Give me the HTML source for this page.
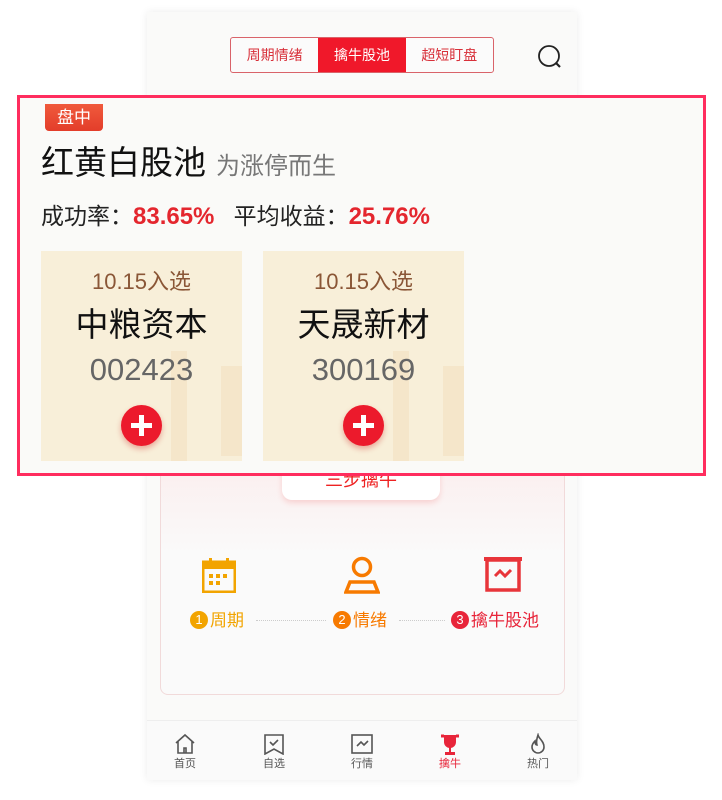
<!DOCTYPE html>
<html><head><meta charset="utf-8"><style>
*{margin:0;padding:0;box-sizing:border-box}
body{width:722px;height:800px;background:#fff;position:relative;overflow:hidden;font-family:"Liberation Sans","Noto Sans CJK SC",sans-serif}
.phone{position:absolute;left:147px;top:12px;width:430px;height:768px;background:#fafaf9;box-shadow:0 0 8px rgba(0,0,0,.08)}
.seg{position:absolute;left:230px;top:37px;width:264px;height:36px;border:1px solid #d9636a;border-radius:3px;display:flex;background:#fbfbfb}
.seg div{flex:1;text-align:center;line-height:34px;font-size:14px;color:#d8303a}
.seg .on{background:#f0182a;color:#fff}
.ov{position:absolute;left:17px;top:95px;width:689px;height:381px;border:3px solid #ff2d5e;background:#fafaf8}
.badge{position:absolute;left:45px;top:104px;width:58px;height:27px;background:linear-gradient(#f05a3c,#e33d2a);border-radius:0 0 4px 4px;color:#fff;font-size:17px;text-align:center;line-height:27px}
.t{position:absolute;left:41px;top:141px;font-size:33px;line-height:44px;color:#111;white-space:nowrap}
.t span{font-size:24px;color:#777;margin-left:10px}
.s{position:absolute;left:41px;top:200px;font-size:23px;line-height:32px;color:#222;white-space:nowrap}
.s b{font-size:24px;font-weight:bold;color:#e4262e}
.card{position:absolute;top:251px;width:201px;height:210px;background:#f8efd9;text-align:center;overflow:hidden}
.card div.x{position:relative;line-height:1.2}
.card .d{margin-top:18px;font-size:22px;color:#8a5636}
.card .n{margin-top:10px;font-size:33px;color:#111}
.card .c{margin-top:6px;font-size:31px;color:#666}
.bar{position:absolute;background:#f3dfc0;opacity:.6}
.plus{position:absolute;left:80px;top:154px;width:41px;height:41px;border-radius:50%;background:#ec1a2c;box-shadow:0 3px 6px rgba(200,0,0,.3)}
.plus:before{content:"";position:absolute;left:10px;top:18px;width:21px;height:5px;background:#fff}
.plus:after{content:"";position:absolute;left:18px;top:10px;width:5px;height:21px;background:#fff}
.box{position:absolute;left:160px;top:460px;width:405px;height:235px;border:1px solid #f1dada;border-radius:8px;background:linear-gradient(#fbeeee,#fafafa 40%)}
.tab3{position:absolute;left:282px;top:462px;width:158px;height:38px;background:#fff;border-radius:0 0 10px 10px;box-shadow:0 3px 6px rgba(240,80,80,.2);color:#e22;font-size:18px;text-align:center;line-height:36px}
.step{position:absolute;top:608px;font-size:17px;line-height:26px;white-space:nowrap}
.num{display:inline-block;width:18px;height:18px;border-radius:50%;color:#fff;font-size:13px;text-align:center;line-height:18px;vertical-align:2px;margin-right:2px}
.dots{position:absolute;top:620px;height:0;border-top:1px dotted #ccc}
.tb{position:absolute;top:720px;left:147px;width:430px;height:60px;border-top:1px solid #eee;background:#fafafa}
.ti{position:absolute;top:733px;width:40px;text-align:center;font-size:11px;line-height:14px;color:#555}
.ti svg{display:block;margin:0 auto 2px}
</style></head><body>
<div class="phone"></div>
<div class="seg"><div>周期情绪</div><div class="on">擒牛股池</div><div>超短盯盘</div></div>
<svg style="position:absolute;left:536px;top:43px" width="28" height="28" viewBox="0 0 28 28"><circle cx="13" cy="13" r="10" fill="none" stroke="#222" stroke-width="1.8"/><path d="M20 20l4 4" stroke="#222" stroke-width="2.2"/></svg>
<div class="box"></div>
<div class="tab3">三步擒牛</div>
<svg style="position:absolute;left:202px;top:557px" width="34" height="36" viewBox="0 0 34 36"><rect x="1" y="5" width="32" height="30" fill="none" stroke="#f2a400" stroke-width="3"/><rect x="1" y="5" width="32" height="7" fill="#f2a400"/><rect x="7" y="1" width="3" height="7" fill="#f2a400"/><rect x="24" y="1" width="3" height="7" fill="#f2a400"/><g fill="#f2a400"><rect x="7" y="17" width="4" height="4"/><rect x="14" y="17" width="4" height="4"/><rect x="21" y="17" width="4" height="4"/><rect x="7" y="24" width="4" height="4"/><rect x="14" y="24" width="4" height="4"/></g></svg>
<svg style="position:absolute;left:344px;top:556px" width="36" height="38" viewBox="0 0 36 38"><circle cx="18" cy="11" r="8.5" fill="none" stroke="#f77a00" stroke-width="3.5"/><path d="M6 26h24l4 10H2z" fill="none" stroke="#f77a00" stroke-width="3.5"/></svg>
<svg style="position:absolute;left:484px;top:557px" width="38" height="36" viewBox="0 0 38 36"><rect x="0" y="0" width="38" height="4" fill="#e8353a"/><rect x="3" y="3" width="32" height="30" fill="none" stroke="#e8353a" stroke-width="3.5"/><path d="M11 19l5-5 5 5 6-6" fill="none" stroke="#e8353a" stroke-width="3"/></svg>
<div class="step" style="left:190px;color:#f2a400"><span class="num" style="background:#f2a400">1</span>周期</div>
<div class="dots" style="left:256px;width:70px"></div>
<div class="step" style="left:333px;color:#f77a00"><span class="num" style="background:#f77a00">2</span>情绪</div>
<div class="dots" style="left:399px;width:46px"></div>
<div class="step" style="left:451px;color:#e8253a"><span class="num" style="background:#e8253a">3</span>擒牛股池</div>
<div class="tb"></div>
<div class="ti" style="left:165px"><svg width="24" height="22" viewBox="0 0 24 22"><path d="M3 10L12 2l9 8M5 8v12h14V8M11 20v-5h2v5" fill="none" stroke="#555" stroke-width="1.6"/></svg>首页</div>
<div class="ti" style="left:254px"><svg width="24" height="22" viewBox="0 0 24 22"><path d="M3 2h18v19l-9-5-9 5z" fill="none" stroke="#555" stroke-width="1.6"/><path d="M8 9l3 3 5-5" fill="none" stroke="#555" stroke-width="1.6"/></svg>自选</div>
<div class="ti" style="left:342px"><svg width="24" height="22" viewBox="0 0 24 22"><rect x="2" y="2" width="20" height="18" fill="none" stroke="#555" stroke-width="1.6"/><path d="M7 13l4-4 3 3 4-4" fill="none" stroke="#555" stroke-width="1.6"/></svg>行情</div>
<div class="ti" style="left:430px;color:#e8253a"><svg width="24" height="22" viewBox="0 0 24 22"><path d="M6 2h12v7a6 6 0 01-12 0z" fill="#e8253a"/><path d="M3 3h3M18 3h3" stroke="#e8253a" stroke-width="3"/><rect x="11" y="14" width="2" height="5" fill="#e8253a"/><rect x="7" y="19" width="10" height="3" fill="#e8253a"/></svg>擒牛</div>
<div class="ti" style="left:518px"><svg width="24" height="22" viewBox="0 0 24 22"><path d="M12 2c1 4 6 6 6 12a6 6 0 01-12 0c0-3 2-5 3-6 0 3 1 4 2 4-1-3 0-7 1-10z" fill="none" stroke="#555" stroke-width="1.6"/></svg>热门</div>
<div class="ov"></div>
<div class="badge">盘中</div>
<div class="t">红黄白股池<span>为涨停而生</span></div>
<div class="s">成功率：<b>83.65%</b>&nbsp;&nbsp; 平均收益：<b>25.76%</b></div>
<div class="card" style="left:41px"><div class="bar" style="left:130px;top:100px;width:16px;height:110px"></div><div class="bar" style="left:180px;top:115px;width:21px;height:90px"></div><div class="x d">10.15入选</div><div class="x n">中粮资本</div><div class="x c">002423</div><div class="plus"></div></div>
<div class="card" style="left:263px"><div class="bar" style="left:130px;top:100px;width:16px;height:110px"></div><div class="bar" style="left:180px;top:115px;width:21px;height:90px"></div><div class="x d">10.15入选</div><div class="x n">天晟新材</div><div class="x c">300169</div><div class="plus"></div></div>
</body></html>
